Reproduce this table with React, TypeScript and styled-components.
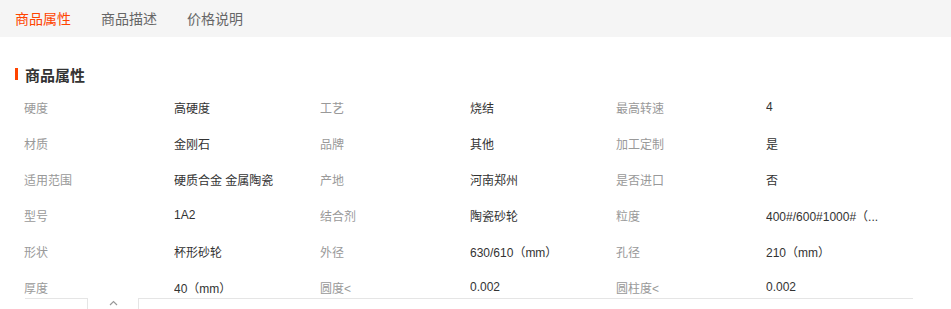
import React from 'react';
import styled, { createGlobalStyle } from 'styled-components';

const GlobalStyle = createGlobalStyle`
  html, body {
    margin: 0;
    padding: 0;
    background: #fff;
    font-family: "Liberation Sans", "Noto Sans CJK SC", sans-serif;
  }
`;

const Page = styled.div`
  width: 951px;
  height: 309px;
  overflow: hidden;
`;

const TabBar = styled.div`
  display: flex;
  align-items: center;
  height: 37px;
  padding-left: 15px;
  gap: 30px;
  background: #f5f5f5;
`;

const Tab = styled.div<{ $active?: boolean }>`
  font-size: 14px;
  line-height: 20px;
  color: ${(p) => (p.$active ? '#ff4400' : '#666')};
  cursor: pointer;
`;

const Section = styled.div`
  padding: 27px 38px 0 15px;
`;

const Heading = styled.h3`
  display: flex;
  align-items: center;
  gap: 7px;
  margin: 0;
  height: 20px;
  font-size: 15px;
  font-weight: bold;
  color: #333;

  &::before {
    content: '';
    width: 3px;
    height: 12px;
    background: #ff4400;
  }
`;

const Table = styled.div`
  display: grid;
  grid-template-columns: repeat(3, 150px 146px);
  grid-auto-rows: 36px;
  margin-top: 5px;
  padding-left: 9px;
  height: 209px;
  overflow: hidden;
`;

const Cell = styled.div<{ $label?: boolean }>`
  display: flex;
  align-items: center;
  font-size: 12px;
  color: ${(p) => (p.$label ? '#999' : '#333')};
  white-space: nowrap;
  overflow: hidden;
`;

const FoldBar = styled.div`
  display: flex;
  margin-left: 10px;
  height: 11px;
`;

const FoldLine = styled.div<{ $grow?: boolean }>`
  border-top: 1px solid #e5e5e5;
  ${(p) => (p.$grow ? 'flex: 1;' : 'width: 62px;')}
`;

const FoldToggle = styled.div`
  width: 50px;
  border-left: 1px solid #e5e5e5;
  border-right: 1px solid #e5e5e5;
  display: flex;
  justify-content: center;
  padding-top: 2px;
  cursor: pointer;
`;

const rows: [string, string][][] = [
  [['硬度', '高硬度'], ['工艺', '烧结'], ['最高转速', '4']],
  [['材质', '金刚石'], ['品牌', '其他'], ['加工定制', '是']],
  [['适用范围', '硬质合金 金属陶瓷'], ['产地', '河南郑州'], ['是否进口', '否']],
  [['型号', '1A2'], ['结合剂', '陶瓷砂轮'], ['粒度', '400#/600#1000#（...']],
  [['形状', '杯形砂轮'], ['外径', '630/610（mm）'], ['孔径', '210（mm）']],
  [['厚度', '40（mm）'], ['圆度<', '0.002'], ['圆柱度<', '0.002']],
];

export default function App() {
  return (
    <Page>
      <GlobalStyle />
      <TabBar>
        <Tab $active>商品属性</Tab>
        <Tab>商品描述</Tab>
        <Tab>价格说明</Tab>
      </TabBar>
      <Section>
        <Heading>商品属性</Heading>
        <Table>
          {rows.flatMap((row, i) =>
            row.flatMap(([label, value], j) => [
              <Cell key={`l${i}${j}`} $label>{label}</Cell>,
              <Cell key={`v${i}${j}`}>{value}</Cell>,
            ])
          )}
        </Table>
        <FoldBar>
          <FoldLine />
          <FoldToggle>
            <svg width="9" height="6" viewBox="0 0 9 6">
              <path d="M1 5 L4.5 1.5 L8 5" fill="none" stroke="#999" strokeWidth="1.2" />
            </svg>
          </FoldToggle>
          <FoldLine $grow />
        </FoldBar>
      </Section>
    </Page>
  );
}
